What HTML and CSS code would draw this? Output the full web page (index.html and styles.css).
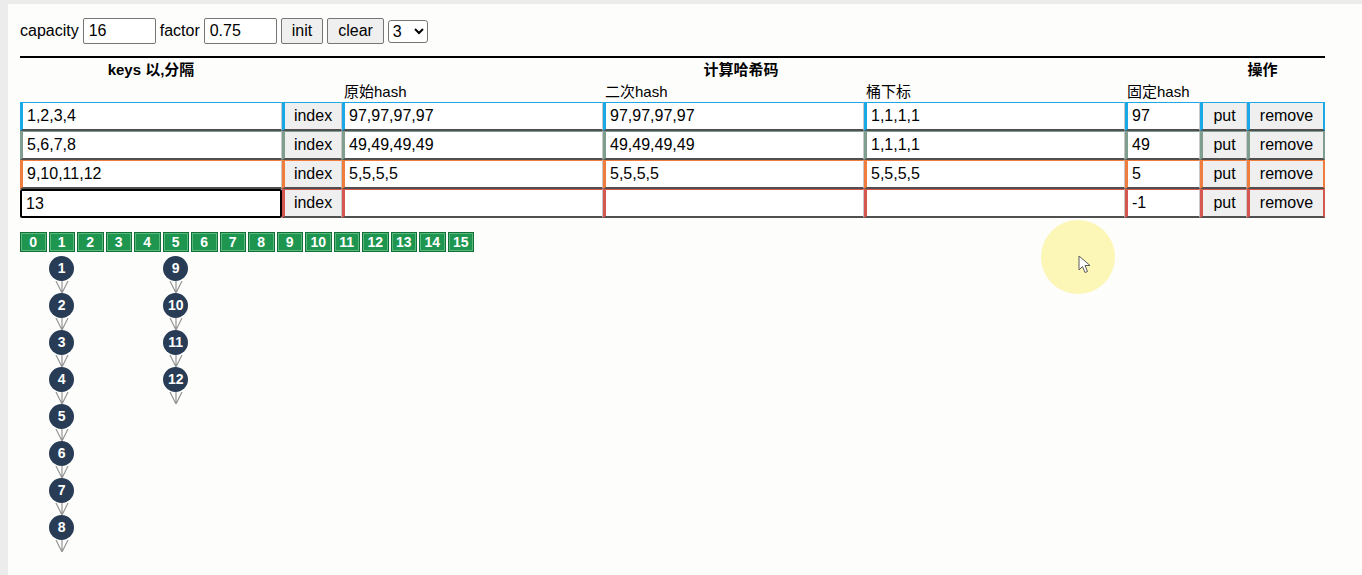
FILE: index.html
```html
<!DOCTYPE html>
<html>
<head>
    <meta charset="utf-8" />
    <title>HashMap</title>
    <link rel="stylesheet" href="styles.css">
</head>
<body>
<div class="page">
    <div class="toolbar">
        <label>capacity</label>
        <input class="num" type="text" value="16" />
        <label>factor</label>
        <input class="num" type="text" value="0.75" />
        <button class="btn">init</button>
        <button class="btn">clear</button>
        <select class="pick">
            <option>3</option>
        </select>
    </div>

    <div class="table">
        <div class="head head-main">
            <div class="th c-keys">keys 以,分隔</div>
            <div class="th c-calc">计算哈希码</div>
            <div class="th c-ops">操作</div>
        </div>
        <div class="head head-sub">
            <div class="sub s1">原始hash</div>
            <div class="sub s2">二次hash</div>
            <div class="sub s3">桶下标</div>
            <div class="sub s4">固定hash</div>
        </div>

        <div class="row blue">
            <input class="cell" value="1,2,3,4" />
            <button class="cell b">index</button>
            <input class="cell" value="97,97,97,97" />
            <input class="cell" value="97,97,97,97" />
            <input class="cell" value="1,1,1,1" />
            <input class="cell" value="97" />
            <button class="cell b">put</button>
            <button class="cell b">remove</button>
        </div>
        <div class="row green">
            <input class="cell" value="5,6,7,8" />
            <button class="cell b">index</button>
            <input class="cell" value="49,49,49,49" />
            <input class="cell" value="49,49,49,49" />
            <input class="cell" value="1,1,1,1" />
            <input class="cell" value="49" />
            <button class="cell b">put</button>
            <button class="cell b">remove</button>
        </div>
        <div class="row orange">
            <input class="cell" value="9,10,11,12" />
            <button class="cell b">index</button>
            <input class="cell" value="5,5,5,5" />
            <input class="cell" value="5,5,5,5" />
            <input class="cell" value="5,5,5,5" />
            <input class="cell" value="5" />
            <button class="cell b">put</button>
            <button class="cell b">remove</button>
        </div>
        <div class="row red">
            <input class="cell focused" value="13" />
            <button class="cell b">index</button>
            <input class="cell" value="" />
            <input class="cell" value="" />
            <input class="cell" value="" />
            <input class="cell" value="-1" />
            <button class="cell b">put</button>
            <button class="cell b">remove</button>
        </div>
    </div>

    <div class="buckets">
        <div class="bucket"><div class="slot">0</div></div>
        <div class="bucket">
            <div class="slot">1</div>
            <div class="chain">
                <div class="node">1</div><svg class="arrow" viewBox="0 0 14 12"><path d="M1 0 L7 12 L13 0 M7 0 L7 12" /></svg>
                <div class="node">2</div><svg class="arrow" viewBox="0 0 14 12"><path d="M1 0 L7 12 L13 0 M7 0 L7 12" /></svg>
                <div class="node">3</div><svg class="arrow" viewBox="0 0 14 12"><path d="M1 0 L7 12 L13 0 M7 0 L7 12" /></svg>
                <div class="node">4</div><svg class="arrow" viewBox="0 0 14 12"><path d="M1 0 L7 12 L13 0 M7 0 L7 12" /></svg>
                <div class="node">5</div><svg class="arrow" viewBox="0 0 14 12"><path d="M1 0 L7 12 L13 0 M7 0 L7 12" /></svg>
                <div class="node">6</div><svg class="arrow" viewBox="0 0 14 12"><path d="M1 0 L7 12 L13 0 M7 0 L7 12" /></svg>
                <div class="node">7</div><svg class="arrow" viewBox="0 0 14 12"><path d="M1 0 L7 12 L13 0 M7 0 L7 12" /></svg>
                <div class="node">8</div><svg class="arrow" viewBox="0 0 14 12"><path d="M1 0 L7 12 L13 0 M7 0 L7 12" /></svg>
            </div>
        </div>
        <div class="bucket"><div class="slot">2</div></div>
        <div class="bucket"><div class="slot">3</div></div>
        <div class="bucket"><div class="slot">4</div></div>
        <div class="bucket">
            <div class="slot">5</div>
            <div class="chain">
                <div class="node">9</div><svg class="arrow" viewBox="0 0 14 12"><path d="M1 0 L7 12 L13 0 M7 0 L7 12" /></svg>
                <div class="node">10</div><svg class="arrow" viewBox="0 0 14 12"><path d="M1 0 L7 12 L13 0 M7 0 L7 12" /></svg>
                <div class="node">11</div><svg class="arrow" viewBox="0 0 14 12"><path d="M1 0 L7 12 L13 0 M7 0 L7 12" /></svg>
                <div class="node">12</div><svg class="arrow" viewBox="0 0 14 12"><path d="M1 0 L7 12 L13 0 M7 0 L7 12" /></svg>
            </div>
        </div>
        <div class="bucket"><div class="slot">6</div></div>
        <div class="bucket"><div class="slot">7</div></div>
        <div class="bucket"><div class="slot">8</div></div>
        <div class="bucket"><div class="slot">9</div></div>
        <div class="bucket"><div class="slot">10</div></div>
        <div class="bucket"><div class="slot">11</div></div>
        <div class="bucket"><div class="slot">12</div></div>
        <div class="bucket"><div class="slot">13</div></div>
        <div class="bucket"><div class="slot">14</div></div>
        <div class="bucket"><div class="slot">15</div></div>
    </div>

    <div class="pointer">
        <svg class="cursor" viewBox="0 0 14 20"><path d="M1 1 L1 15 L4.5 11.5 L7 17.5 L9.5 16.5 L7 10.5 L12 10.5 Z" /></svg>
    </div>
</div>
</body>
</html>
```
FILE: styles.css
```css
body {
    margin: 0;
    background-color: rgb(236, 236, 236);
    font-family: "Liberation Sans", "Noto Sans CJK SC", sans-serif;
    color: rgb(0, 0, 0);
}

.page {
    position: relative;
    margin: 4px 0 0 8px;
    height: 571px;
    box-sizing: border-box;
    padding: 13px 12px 0 12px;
    background-color: rgb(253, 253, 252);
}

/* toolbar */
.toolbar {
    display: flex;
    align-items: center;
    gap: 4px;
    height: 26px;
    font-size: 16px;
    padding-top: 1px;
}

.toolbar .num {
    width: 73px;
    height: 26px;
    box-sizing: border-box;
    font-family: "Liberation Sans", sans-serif;
    font-size: 16px;
    padding: 0 5px;
    border: 1px solid rgb(118, 118, 118);
    border-radius: 2px;
    background: white;
}

.toolbar .btn {
    height: 26px;
    font-family: "Liberation Sans", sans-serif;
    font-size: 16px;
    padding: 0 10px;
    background-color: rgb(239, 239, 239);
    border: 1px solid rgb(118, 118, 118);
    border-radius: 2px;
}

.toolbar .pick {
    height: 23px;
    width: 40px;
    font-family: "Liberation Sans", sans-serif;
    font-size: 16px;
    border: 1px solid rgb(118, 118, 118);
    border-radius: 3px;
    background: white;
}

/* table */
.table {
    width: 1305px;
    margin-top: 12px;
    border-top: 2px solid black;
}

.head {
    display: grid;
    grid-template-columns: 262px 60px 261px 261px 261px 75px 47px 78px;
}

.head-main {
    height: 24px;
    font-size: 15px;
    font-weight: bold;
    line-height: 24px;
}

.th {
    text-align: center;
}

.c-keys { grid-column: 1 / 2; }
.c-calc { grid-column: 2 / 7; }
.c-ops  { grid-column: 7 / 9; }

.head-sub {
    height: 20px;
    font-size: 15px;
    line-height: 20px;
}

.sub { padding-left: 2px; }
.s1 { grid-column: 3; }
.s2 { grid-column: 4; }
.s3 { grid-column: 5; }
.s4 { grid-column: 6; }

.row {
    display: grid;
    grid-template-columns: 262px 60px 261px 261px 261px 75px 47px 78px;
    height: 29px;
}

.cell {
    box-sizing: border-box;
    height: 29px;
    margin: 0;
    font-family: "Liberation Sans", sans-serif;
    font-size: 16px;
    color: black;
    background-color: white;
    padding: 0 4px;
    border-top: 1px solid var(--c);
    border-left: 3px solid var(--c);
    border-right: 1px solid rgb(200, 200, 200);
    border-bottom: 2px solid rgb(80, 80, 80);
    outline: none;
}

.cell:last-child {
    border-right: 2px solid var(--c);
}

.cell.b {
    background-color: rgb(239, 239, 239);
    padding: 0;
    text-align: center;
}

.cell.focused {
    border: 2px solid black;
    border-radius: 2px;
    box-shadow: inset 0 0 0 1px white;
}

.blue   { --c: rgb(27, 168, 230); }
.green  { --c: rgb(127, 158, 143); }
.orange { --c: rgb(240, 125, 62); }
.red    { --c: rgb(214, 86, 80); }

/* buckets */
.buckets {
    display: flex;
    gap: 2px;
    margin-top: 14px;
}

.bucket {
    display: flex;
    flex-direction: column;
    align-items: center;
    width: 26.5px;
}

.slot {
    width: 100%;
    height: 20px;
    box-sizing: border-box;
    background-color: rgb(30, 150, 80);
    border: 1px solid rgb(20, 110, 55);
    box-shadow: inset 0 0 0 1px rgb(90, 185, 125);
    color: white;
    font-size: 14px;
    font-weight: bold;
    line-height: 18px;
    text-align: center;
}

.chain {
    display: flex;
    flex-direction: column;
    align-items: center;
    margin-top: 4px;
}

.node {
    width: 25px;
    height: 25px;
    border-radius: 50%;
    background-color: rgb(40, 60, 85);
    color: white;
    font-size: 14px;
    font-weight: bold;
    line-height: 25px;
    text-align: center;
}

.arrow {
    width: 14px;
    height: 12px;
    display: block;
}

.arrow path {
    fill: none;
    stroke: rgb(150, 150, 150);
    stroke-width: 1.2;
}

/* cursor highlight overlay */
.pointer {
    position: absolute;
    left: 1033px;
    top: 216px;
    width: 74px;
    height: 74px;
    border-radius: 50%;
    background-color: rgba(252, 246, 170, 0.85);
}

.cursor {
    position: absolute;
    left: 37px;
    top: 35px;
    width: 14px;
    height: 20px;
}

.cursor path {
    fill: white;
    stroke: rgb(90, 90, 90);
    stroke-width: 1;
}
```
